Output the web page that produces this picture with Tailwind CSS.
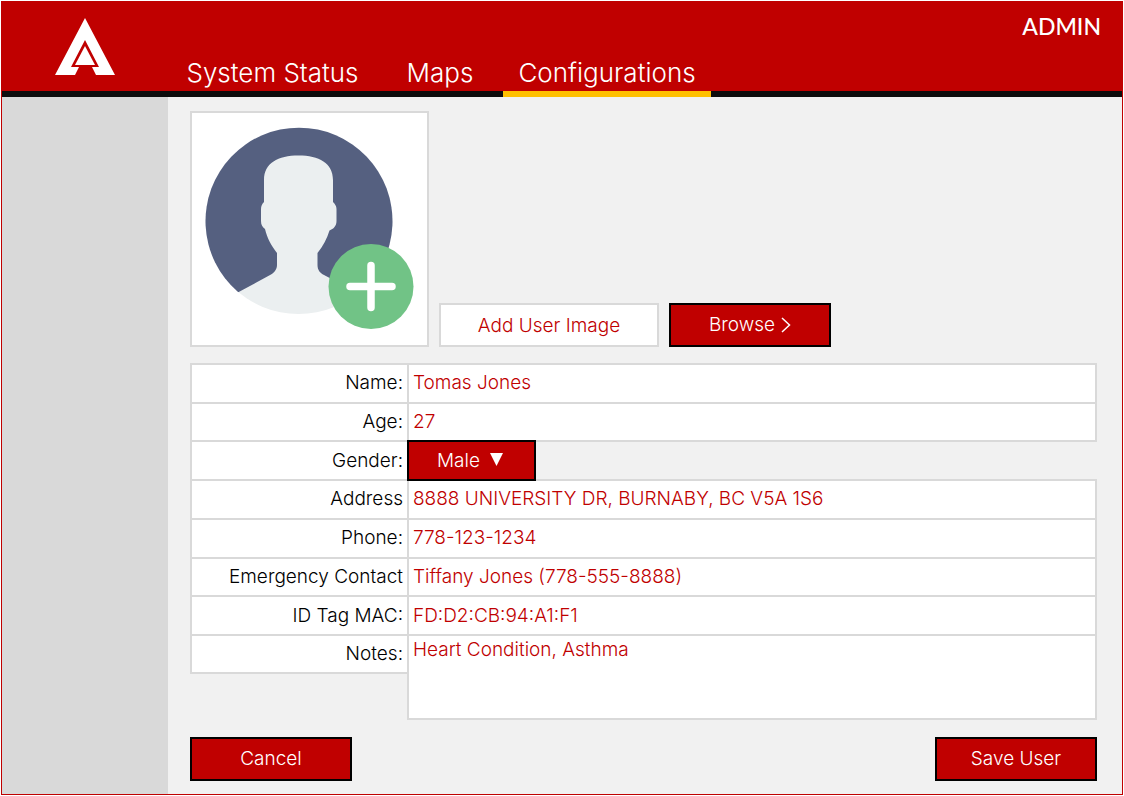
<!DOCTYPE html>
<html lang="en">
<head>
<meta charset="utf-8">
<meta name="viewport" content="width=device-width, initial-scale=1">
<title>User configuration</title>
<script src="https://cdn.jsdelivr.net/npm/@tailwindcss/browser@4"></script>
</head>
<body class="bg-white p-px font-[Inter,sans-serif] text-[19px] leading-7 font-light text-black">
<div class="flex min-h-[calc(100vh-2px)] flex-col border border-[#c00000]">
  <header class="flex h-[95px] border-b-6 border-[#0d0d0d] bg-[#c00000] text-white">
    <a href="#" aria-label="Home" class="flex w-[166px] shrink-0 justify-center pt-4">
      <svg class="h-[58px] w-[62px]" viewBox="0 0 62 58" fill="none" aria-hidden="true">
        <path fill="#fff" d="M31 0 61 57H42L38 49H45L31 22 17 49H25L21 57H1Z"/>
        <path fill="#fff" d="M31 28 41 47H21Z"/>
      </svg>
    </a>
    <nav class="flex h-[95px] items-end text-[26px] leading-8">
      <a href="#" class="flex h-full w-[209px] items-end justify-center pb-2">System Status</a>
      <a href="#" class="flex h-full w-[126px] items-end justify-center pb-2">Maps</a>
      <a href="#" aria-current="page" class="flex h-full w-[208px] items-end justify-center border-b-6 border-[#ffc000] pb-[2px]">Configurations</a>
    </nav>
    <div class="ml-auto pt-2 pr-[21px] font-[Lato,sans-serif] text-[23px] leading-8 font-medium">ADMIN</div>
  </header>
  <div class="flex grow">
    <aside class="w-[166px] shrink-0 bg-[#d9d9d9]"></aside>
    <main class="grow bg-[#f1f1f1] pt-[14px] pr-[25px] pb-3 pl-[22px]">
      <form>
        <div class="flex items-end gap-[10px]">
          <div class="flex h-[236px] w-[239px] items-start border-2 border-[#d9d9d9] bg-white pt-[14px] pl-[13px]">
            <svg class="h-[203px] w-[209px]" viewBox="0 0 209 203" role="img" aria-label="User picture">
              <defs><clipPath id="disc"><circle cx="93.500" cy="93.500" r="93.500"/></clipPath></defs>
              <path d="M33 165A93.500 93.500 0 1 1 155 165L94 170Z" fill="#556080"/>
              <path clip-path="url(#disc)" fill="#ebeff0" d="M59 75V53C59 36 73 28.500 93.500 28.500S128 36 128 53V75C130 77 131.500 79 131.500 82V94C131.500 99 128.500 102 124.500 103.500 122 112 118 119 112.500 126V138C112.500 143 115 146 119 148L155 167V190H30V167L66 147.500C69.500 145.500 72 142 72 138V126C66.500 119 62 111 60 102 57.500 100 56 98 56 94V82C56 79 57 77 59 75Z"/>
              <circle cx="166" cy="159.500" r="42.500" fill="#71c386"/>
              <path d="M166 138.500V180.500M145 159.500H187" stroke="#fff" stroke-width="7.500" stroke-linecap="round"/>
            </svg>
          </div>
          <input type="text" aria-label="User image" value="Add User Image" class="h-[44px] w-[220px] border-2 border-[#d9d9d9] bg-white text-center text-[#c00000]">
          <button type="button" class="flex h-[44px] w-[162px] items-center justify-center gap-[6px] border-2 border-black bg-[#c00000] text-white">Browse
            <svg class="h-4 w-[10px]" viewBox="0 0 10 16" fill="none" stroke="currentColor" stroke-width="1.500" aria-hidden="true"><path d="M1 1 8.500 8 1 15"/></svg>
          </button>
        </div>

        <div class="mt-4 grid h-[271px] auto-rows-fr">
          <div class="-mb-[2px] flex">
            <label for="name" class="-mr-[2px] flex w-[219px] shrink-0 items-center justify-end border-2 border-[#d9d9d9] bg-white pr-1">Name:</label>
            <input id="name" type="text" value="Tomas Jones" class="min-w-0 grow border-2 border-[#d9d9d9] bg-white px-1 text-[#c00000]">
          </div>
          <div class="-mb-[2px] flex">
            <label for="age" class="-mr-[2px] flex w-[219px] shrink-0 items-center justify-end border-2 border-[#d9d9d9] bg-white pr-1">Age:</label>
            <input id="age" type="text" value="27" class="min-w-0 grow border-2 border-[#d9d9d9] bg-white px-1 text-[#c00000]">
          </div>
          <div class="z-10 -mb-[2px] flex">
            <label for="gender" class="-mr-[2px] flex w-[219px] shrink-0 items-center justify-end border-2 border-[#d9d9d9] bg-white pr-1">Gender:</label>
            <div class="relative flex">
              <select id="gender" class="w-[129px] appearance-none border-2 border-black bg-[#c00000] pl-7 text-white"><option>Male</option><option>Female</option></select>
              <svg class="pointer-events-none absolute top-[13px] right-8 h-[13px] w-[15px]" viewBox="0 0 15 13" fill="#fff" aria-hidden="true"><path d="M1 0H14L7.500 13Z"/></svg>
            </div>
          </div>
          <div class="-mb-[2px] flex">
            <label for="address" class="-mr-[2px] flex w-[219px] shrink-0 items-center justify-end border-2 border-[#d9d9d9] bg-white pr-1">Address</label>
            <input id="address" type="text" value="8888 UNIVERSITY DR, BURNABY, BC V5A 1S6" class="min-w-0 grow border-2 border-[#d9d9d9] bg-white px-1 text-[#c00000]">
          </div>
          <div class="-mb-[2px] flex">
            <label for="phone" class="-mr-[2px] flex w-[219px] shrink-0 items-center justify-end border-2 border-[#d9d9d9] bg-white pr-1">Phone:</label>
            <input id="phone" type="text" value="778-123-1234" class="min-w-0 grow border-2 border-[#d9d9d9] bg-white px-1 text-[#c00000]">
          </div>
          <div class="-mb-[2px] flex">
            <label for="contact" class="-mr-[2px] flex w-[219px] shrink-0 items-center justify-end border-2 border-[#d9d9d9] bg-white pr-1">Emergency Contact</label>
            <input id="contact" type="text" value="Tiffany Jones (778-555-8888)" class="min-w-0 grow border-2 border-[#d9d9d9] bg-white px-1 text-[#c00000]">
          </div>
          <div class="-mb-[2px] flex">
            <label for="mac" class="-mr-[2px] flex w-[219px] shrink-0 items-center justify-end border-2 border-[#d9d9d9] bg-white pr-1">ID Tag MAC:</label>
            <input id="mac" type="text" value="FD:D2:CB:94:A1:F1" class="min-w-0 grow border-2 border-[#d9d9d9] bg-white px-1 text-[#c00000]">
          </div>
        </div>
        <div class="flex items-start">
          <label for="notes" class="-mr-[2px] flex h-10 w-[219px] shrink-0 items-center justify-end border-2 border-[#d9d9d9] bg-white pr-1">Notes:</label>
          <textarea id="notes" class="h-[86px] min-w-0 grow resize-none border-2 border-[#d9d9d9] bg-white px-1 text-[#c00000]">Heart Condition, Asthma</textarea>
        </div>

        <div class="mt-[17px] flex justify-between">
          <button type="button" class="h-[44px] w-[162px] border-2 border-black bg-[#c00000] text-white">Cancel</button>
          <button type="submit" class="h-[44px] w-[162px] border-2 border-black bg-[#c00000] text-white">Save User</button>
        </div>
      </form>
    </main>
  </div>
</div>
</body>
</html>
